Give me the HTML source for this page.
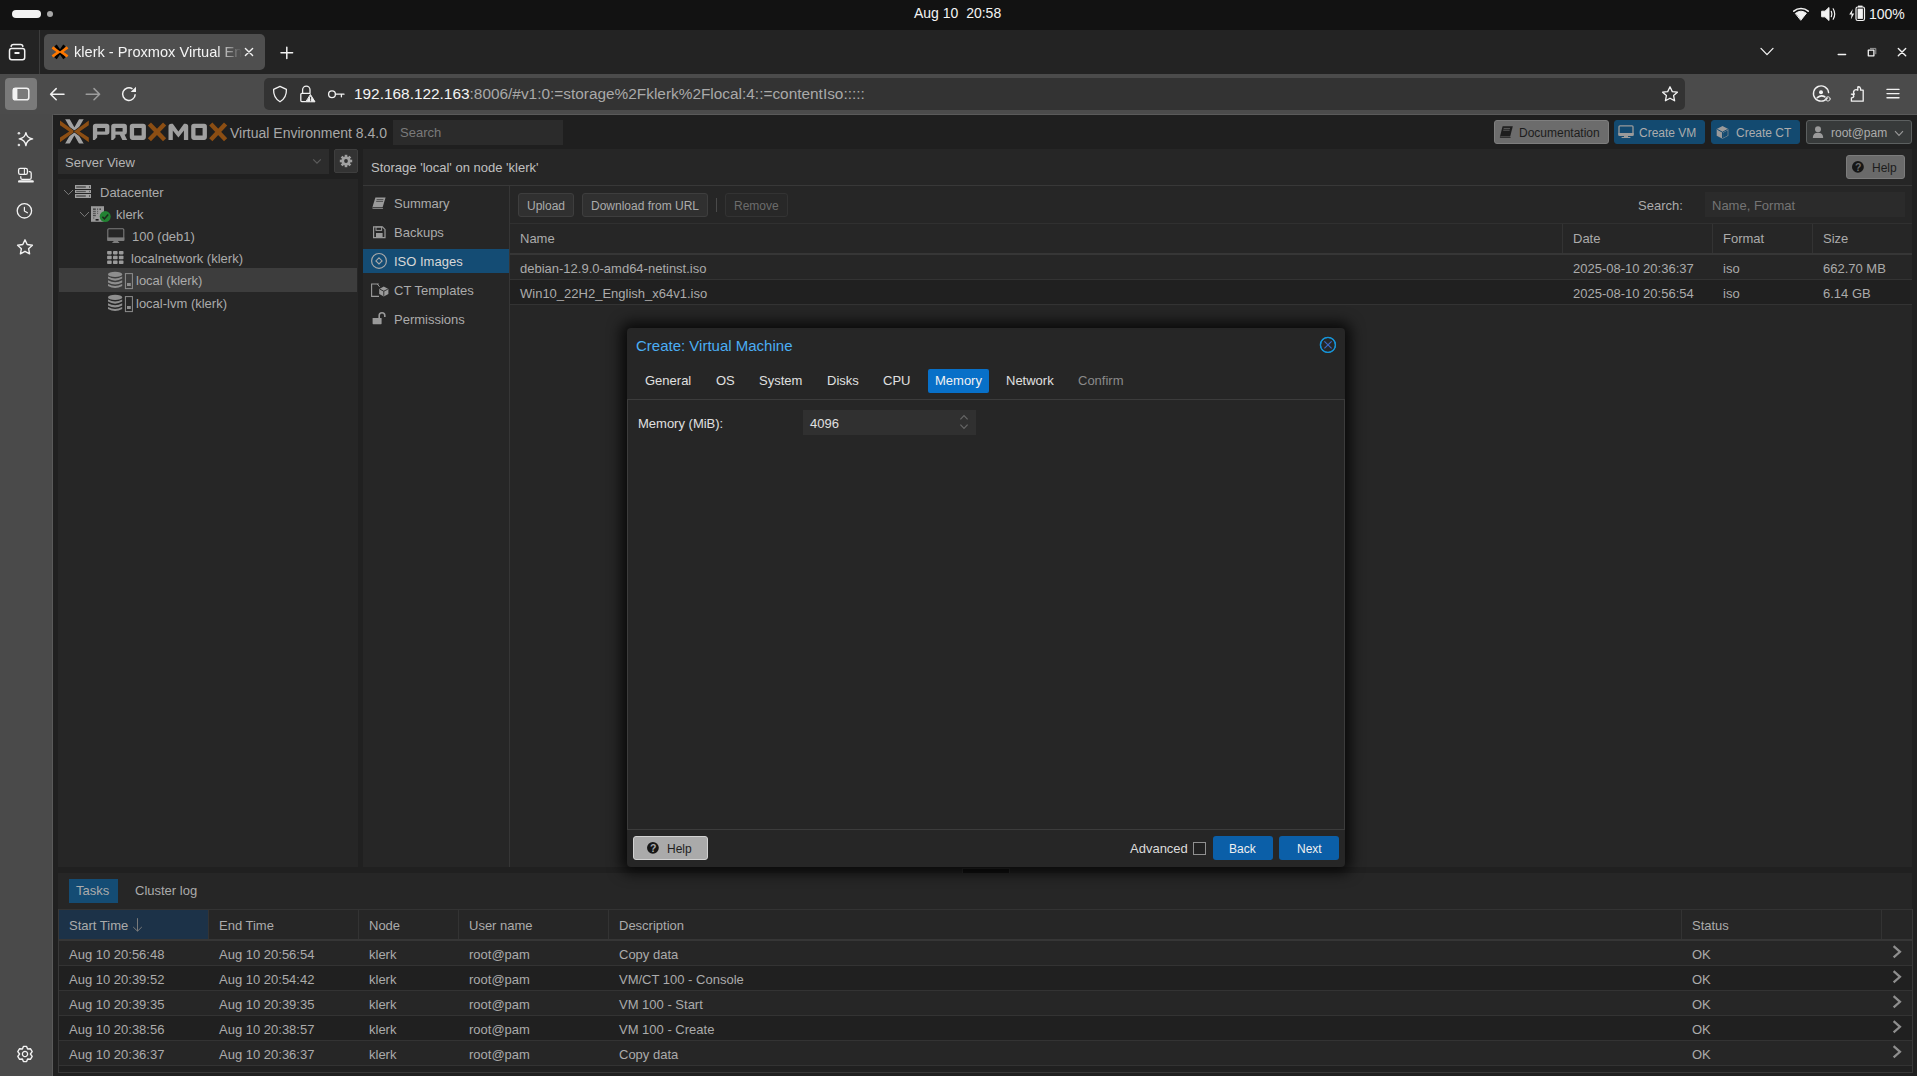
<!DOCTYPE html>
<html><head><meta charset="utf-8">
<style>
*{box-sizing:border-box}
html,body{margin:0;padding:0}
body{width:1917px;height:1076px;overflow:hidden;position:relative;background:#1b1b1b;font-family:"Liberation Sans",sans-serif;color:#d6d6d6}
.a{position:absolute}
.t{position:absolute;white-space:nowrap}
svg{position:absolute;overflow:visible}
</style></head><body>

<!-- ===== OS top bar ===== -->
<div class="a" style="left:0;top:0;width:1917px;height:30px;background:#121212"></div>
<div class="a" style="left:12px;top:10px;width:29px;height:8px;border-radius:4px;background:#f2f2f2"></div>
<div class="a" style="left:47px;top:11px;width:6px;height:6px;border-radius:3px;background:#a8a8a8"></div>
<div class="t" style="left:914px;top:3px;height:20px;line-height:20px;font-size:14px;color:#f4f4f4">Aug 10&nbsp;&nbsp;20:58</div>
<div class="t" style="left:1869px;top:4px;height:20px;line-height:20px;font-size:14px;color:#f4f4f4">100%</div>

<!-- ===== tab strip ===== -->
<div class="a" style="left:0;top:30px;width:1917px;height:44px;background:#232323"></div>
<div class="a" style="left:39px;top:30px;width:1px;height:44px;background:#3c3c3c"></div>
<div class="a" style="left:44px;top:34px;width:221px;height:36px;border-radius:5px;background:#4f4f4f"></div>
<div class="t" style="left:74px;top:42px;height:20px;line-height:20px;font-size:14.6px;color:#f4f4f4;width:168px;overflow:hidden;-webkit-mask-image:linear-gradient(90deg,#000 85%,transparent)">klerk - Proxmox Virtual Environment</div>

<!-- ===== nav toolbar ===== -->
<div class="a" style="left:0;top:74px;width:1917px;height:40px;background:#4b4b4b"></div>
<div class="a" style="left:5px;top:78px;width:32px;height:32px;border-radius:4px;background:#7a7a7a"></div>
<div class="a" style="left:264px;top:78px;width:1421px;height:32px;border-radius:5px;background:#333333"></div>
<div class="t" style="left:354px;top:83px;height:22px;line-height:22px;font-size:15.4px;color:#f4f4f4">192.168.122.163<span style="color:#a9a9a9">:8006/#v1:0:=storage%2Fklerk%2Flocal:4::=contentIso:::::</span></div>

<!-- ===== browser sidebar ===== -->
<div class="a" style="left:0;top:114px;width:53px;height:962px;background:#4a4a4a"></div>
<div class="a" style="left:52px;top:114px;width:1865px;height:962px;background:#202020;border-top:1px solid #5a5a5a;border-left:1px solid #5a5a5a;border-top-left-radius:2px"></div>

<!-- ===== proxmox header ===== -->
<div class="a" style="left:53px;top:115px;width:1864px;height:34px;background:#1f1f1f"></div>
<div class="t" style="left:230px;top:123px;height:20px;line-height:20px;font-size:14px;color:#a8a8a8">Virtual Environment 8.4.0</div>
<div class="a" style="left:393px;top:120px;width:170px;height:25px;background:#2b2b2b"></div>
<div class="t" style="left:400px;top:123px;height:20px;line-height:20px;font-size:13px;color:#7a7a7a">Search</div>

<!-- header buttons -->
<div class="a" style="left:1494px;top:120px;width:115px;height:24px;border-radius:3px;background:#6c6c6c;border:1px solid #7e7e7e"></div>
<div class="t" style="left:1519px;top:123px;height:20px;line-height:20px;font-size:12px;color:#1c1c1c">Documentation</div>
<div class="a" style="left:1614px;top:120px;width:91px;height:24px;border-radius:3px;background:#134a70;border:1px solid #134a70"></div>
<div class="t" style="left:1639px;top:123px;height:20px;line-height:20px;font-size:12px;color:#acacac">Create VM</div>
<div class="a" style="left:1711px;top:120px;width:89px;height:24px;border-radius:3px;background:#134a70;border:1px solid #134a70"></div>
<div class="t" style="left:1736px;top:123px;height:20px;line-height:20px;font-size:12px;color:#acacac">Create CT</div>
<div class="a" style="left:1806px;top:120px;width:106px;height:24px;border-radius:3px;background:#373a3a;border:1px solid #5c6060"></div>
<div class="t" style="left:1831px;top:123px;height:20px;line-height:20px;font-size:12px;color:#acacac">root@pam</div>

<!-- ===== left tree ===== -->
<div class="a" style="left:58px;top:149px;width:271px;height:25px;background:#2c2c2c"></div>
<div class="t" style="left:65px;top:153px;height:20px;line-height:20px;font-size:13px;color:#b4b4b4">Server View</div>
<div class="a" style="left:334px;top:149px;width:24px;height:24px;border-radius:2px;background:#333;border:1px solid #3e3e3e"></div>
<div class="a" style="left:58px;top:179px;width:300px;height:688px;background:#262626"></div>
<div class="a" style="left:59px;top:268px;width:298px;height:24px;background:#3d3d3d"></div>
<div class="t" style="left:100px;top:183px;height:20px;line-height:20px;font-size:13px;color:#ababab">Datacenter</div>
<div class="t" style="left:116px;top:205px;height:20px;line-height:20px;font-size:13px;color:#ababab">klerk</div>
<div class="t" style="left:132px;top:227px;height:20px;line-height:20px;font-size:13px;color:#ababab">100 (deb1)</div>
<div class="t" style="left:131px;top:249px;height:20px;line-height:20px;font-size:13px;color:#ababab">localnetwork (klerk)</div>
<div class="t" style="left:136px;top:271px;height:20px;line-height:20px;font-size:13px;color:#ababab">local (klerk)</div>
<div class="t" style="left:136px;top:294px;height:20px;line-height:20px;font-size:13px;color:#ababab">local-lvm (klerk)</div>

<!-- ===== content panel ===== -->
<div class="a" style="left:363px;top:149px;width:1549px;height:718px;background:#262626"></div>
<div class="a" style="left:363px;top:185px;width:1549px;height:1px;background:#383838"></div>
<div class="t" style="left:371px;top:158px;height:20px;line-height:20px;font-size:13px;color:#c0c0c0">Storage 'local' on node 'klerk'</div>


<div class="a" style="left:1846px;top:155px;width:59px;height:24px;border-radius:3px;background:#6a6a6a;border:1px solid #7c7c7c"></div>
<div class="t" style="left:1872px;top:158px;height:20px;line-height:20px;font-size:12px;color:#1c1c1c">Help</div>
<!-- nav menu -->
<div class="a" style="left:509px;top:186px;width:1px;height:681px;background:#363636"></div>
<div class="a" style="left:363px;top:249px;width:146px;height:24px;background:#144c74"></div>
<div class="t" style="left:394px;top:194px;height:20px;line-height:20px;font-size:13px;color:#ababab">Summary</div>
<div class="t" style="left:394px;top:223px;height:20px;line-height:20px;font-size:13px;color:#ababab">Backups</div>
<div class="t" style="left:394px;top:252px;height:20px;line-height:20px;font-size:13px;color:#d8d8d8">ISO Images</div>
<div class="t" style="left:394px;top:281px;height:20px;line-height:20px;font-size:13px;color:#ababab">CT Templates</div>
<div class="t" style="left:394px;top:310px;height:20px;line-height:20px;font-size:13px;color:#ababab">Permissions</div>

<!-- iso toolbar -->
<div class="a" style="left:518px;top:193px;width:56px;height:24px;border-radius:3px;background:#303030;border:1px solid #3e3e3e"></div>
<div class="t" style="left:527px;top:196px;height:20px;line-height:20px;font-size:12px;color:#ababab">Upload</div>
<div class="a" style="left:582px;top:193px;width:126px;height:24px;border-radius:3px;background:#303030;border:1px solid #3e3e3e"></div>
<div class="t" style="left:591px;top:196px;height:20px;line-height:20px;font-size:12px;color:#ababab">Download from URL</div>
<div class="a" style="left:716px;top:198px;width:1px;height:14px;background:#4a4a4a"></div>
<div class="a" style="left:725px;top:193px;width:63px;height:24px;border-radius:3px;background:#282828;border:1px solid #333"></div>
<div class="t" style="left:734px;top:196px;height:20px;line-height:20px;font-size:12px;color:#6c6c6c">Remove</div>
<div class="t" style="left:1638px;top:196px;height:20px;line-height:20px;font-size:13px;color:#ababab">Search:</div>
<div class="a" style="left:1705px;top:192px;width:200px;height:25px;background:#2b2b2b"></div>
<div class="t" style="left:1712px;top:196px;height:20px;line-height:20px;font-size:13px;color:#747474">Name, Format</div>
<div class="a" style="left:510px;top:223px;width:1402px;height:1px;background:#303030"></div>

<!-- iso grid -->
<div class="a" style="left:510px;top:253px;width:1402px;height:2px;background:#363636"></div>
<div class="a" style="left:1562px;top:224px;width:1px;height:29px;background:#333"></div>
<div class="a" style="left:1712px;top:224px;width:1px;height:29px;background:#333"></div>
<div class="a" style="left:1812px;top:224px;width:1px;height:29px;background:#333"></div>
<div class="t" style="left:520px;top:229px;height:20px;line-height:20px;font-size:13px;color:#ababab">Name</div>
<div class="t" style="left:1573px;top:229px;height:20px;line-height:20px;font-size:13px;color:#ababab">Date</div>
<div class="t" style="left:1723px;top:229px;height:20px;line-height:20px;font-size:13px;color:#ababab">Format</div>
<div class="t" style="left:1823px;top:229px;height:20px;line-height:20px;font-size:13px;color:#ababab">Size</div>
<div class="a" style="left:510px;top:279px;width:1402px;height:1px;background:#333"></div>
<div class="a" style="left:510px;top:280px;width:1402px;height:24px;background:#202020"></div>
<div class="a" style="left:510px;top:304px;width:1402px;height:1px;background:#333"></div>
<div class="t" style="left:520px;top:259px;height:20px;line-height:20px;font-size:13px;color:#ababab">debian-12.9.0-amd64-netinst.iso</div>
<div class="t" style="left:1573px;top:259px;height:20px;line-height:20px;font-size:13px;color:#ababab">2025-08-10 20:36:37</div>
<div class="t" style="left:1723px;top:259px;height:20px;line-height:20px;font-size:13px;color:#ababab">iso</div>
<div class="t" style="left:1823px;top:259px;height:20px;line-height:20px;font-size:13px;color:#ababab">662.70 MB</div>
<div class="t" style="left:520px;top:284px;height:20px;line-height:20px;font-size:13px;color:#ababab">Win10_22H2_English_x64v1.iso</div>
<div class="t" style="left:1573px;top:284px;height:20px;line-height:20px;font-size:13px;color:#ababab">2025-08-10 20:56:54</div>
<div class="t" style="left:1723px;top:284px;height:20px;line-height:20px;font-size:13px;color:#ababab">iso</div>
<div class="t" style="left:1823px;top:284px;height:20px;line-height:20px;font-size:13px;color:#ababab">6.14 GB</div>

<!-- ===== bottom tasks panel ===== -->
<div class="a" style="left:58px;top:873px;width:1854px;height:203px;background:#262626"></div>
<div class="a" style="left:69px;top:879px;width:49px;height:24px;background:#144c74"></div>
<div class="t" style="left:76px;top:881px;height:20px;line-height:20px;font-size:13px;color:#ababab">Tasks</div>
<div class="t" style="left:135px;top:881px;height:20px;line-height:20px;font-size:13px;color:#ababab">Cluster log</div>
<div class="a" style="left:58px;top:909px;width:1854px;height:1px;background:#333"></div>
<div class="a" style="left:59px;top:910px;width:149px;height:30px;background:#1c3248"></div>
<div class="a" style="left:58px;top:939px;width:1854px;height:2px;background:#363636"></div>
<div class="a" style="left:208px;top:910px;width:1px;height:29px;background:#333"></div>
<div class="a" style="left:358px;top:910px;width:1px;height:29px;background:#333"></div>
<div class="a" style="left:458px;top:910px;width:1px;height:29px;background:#333"></div>
<div class="a" style="left:608px;top:910px;width:1px;height:29px;background:#333"></div>
<div class="a" style="left:1681px;top:910px;width:1px;height:29px;background:#333"></div>
<div class="a" style="left:1881px;top:910px;width:1px;height:29px;background:#333"></div>
<div class="t" style="left:69px;top:916px;height:20px;line-height:20px;font-size:13px;color:#ababab">Start Time</div>
<div class="t" style="left:219px;top:916px;height:20px;line-height:20px;font-size:13px;color:#ababab">End Time</div>
<div class="t" style="left:369px;top:916px;height:20px;line-height:20px;font-size:13px;color:#ababab">Node</div>
<div class="t" style="left:469px;top:916px;height:20px;line-height:20px;font-size:13px;color:#ababab">User name</div>
<div class="t" style="left:619px;top:916px;height:20px;line-height:20px;font-size:13px;color:#ababab">Description</div>
<div class="t" style="left:1692px;top:916px;height:20px;line-height:20px;font-size:13px;color:#ababab">Status</div>
<div class="a" style="left:58px;top:965px;width:1854px;height:1px;background:#333"></div>
<div class="t" style="left:69px;top:945px;height:20px;line-height:20px;font-size:13px;color:#ababab">Aug 10 20:56:48</div>
<div class="t" style="left:219px;top:945px;height:20px;line-height:20px;font-size:13px;color:#ababab">Aug 10 20:56:54</div>
<div class="t" style="left:369px;top:945px;height:20px;line-height:20px;font-size:13px;color:#ababab">klerk</div>
<div class="t" style="left:469px;top:945px;height:20px;line-height:20px;font-size:13px;color:#ababab">root@pam</div>
<div class="t" style="left:619px;top:945px;height:20px;line-height:20px;font-size:13px;color:#ababab">Copy data</div>
<div class="t" style="left:1692px;top:945px;height:20px;line-height:20px;font-size:13px;color:#ababab">OK</div>
<div class="a" style="left:58px;top:966px;width:1854px;height:24px;background:#202020"></div>
<div class="a" style="left:58px;top:990px;width:1854px;height:1px;background:#333"></div>
<div class="t" style="left:69px;top:970px;height:20px;line-height:20px;font-size:13px;color:#ababab">Aug 10 20:39:52</div>
<div class="t" style="left:219px;top:970px;height:20px;line-height:20px;font-size:13px;color:#ababab">Aug 10 20:54:42</div>
<div class="t" style="left:369px;top:970px;height:20px;line-height:20px;font-size:13px;color:#ababab">klerk</div>
<div class="t" style="left:469px;top:970px;height:20px;line-height:20px;font-size:13px;color:#ababab">root@pam</div>
<div class="t" style="left:619px;top:970px;height:20px;line-height:20px;font-size:13px;color:#ababab">VM/CT 100 - Console</div>
<div class="t" style="left:1692px;top:970px;height:20px;line-height:20px;font-size:13px;color:#ababab">OK</div>
<div class="a" style="left:58px;top:1015px;width:1854px;height:1px;background:#333"></div>
<div class="t" style="left:69px;top:995px;height:20px;line-height:20px;font-size:13px;color:#ababab">Aug 10 20:39:35</div>
<div class="t" style="left:219px;top:995px;height:20px;line-height:20px;font-size:13px;color:#ababab">Aug 10 20:39:35</div>
<div class="t" style="left:369px;top:995px;height:20px;line-height:20px;font-size:13px;color:#ababab">klerk</div>
<div class="t" style="left:469px;top:995px;height:20px;line-height:20px;font-size:13px;color:#ababab">root@pam</div>
<div class="t" style="left:619px;top:995px;height:20px;line-height:20px;font-size:13px;color:#ababab">VM 100 - Start</div>
<div class="t" style="left:1692px;top:995px;height:20px;line-height:20px;font-size:13px;color:#ababab">OK</div>
<div class="a" style="left:58px;top:1016px;width:1854px;height:24px;background:#202020"></div>
<div class="a" style="left:58px;top:1040px;width:1854px;height:1px;background:#333"></div>
<div class="t" style="left:69px;top:1020px;height:20px;line-height:20px;font-size:13px;color:#ababab">Aug 10 20:38:56</div>
<div class="t" style="left:219px;top:1020px;height:20px;line-height:20px;font-size:13px;color:#ababab">Aug 10 20:38:57</div>
<div class="t" style="left:369px;top:1020px;height:20px;line-height:20px;font-size:13px;color:#ababab">klerk</div>
<div class="t" style="left:469px;top:1020px;height:20px;line-height:20px;font-size:13px;color:#ababab">root@pam</div>
<div class="t" style="left:619px;top:1020px;height:20px;line-height:20px;font-size:13px;color:#ababab">VM 100 - Create</div>
<div class="t" style="left:1692px;top:1020px;height:20px;line-height:20px;font-size:13px;color:#ababab">OK</div>
<div class="a" style="left:58px;top:1065px;width:1854px;height:1px;background:#333"></div>
<div class="t" style="left:69px;top:1045px;height:20px;line-height:20px;font-size:13px;color:#ababab">Aug 10 20:36:37</div>
<div class="t" style="left:219px;top:1045px;height:20px;line-height:20px;font-size:13px;color:#ababab">Aug 10 20:36:37</div>
<div class="t" style="left:369px;top:1045px;height:20px;line-height:20px;font-size:13px;color:#ababab">klerk</div>
<div class="t" style="left:469px;top:1045px;height:20px;line-height:20px;font-size:13px;color:#ababab">root@pam</div>
<div class="t" style="left:619px;top:1045px;height:20px;line-height:20px;font-size:13px;color:#ababab">Copy data</div>
<div class="t" style="left:1692px;top:1045px;height:20px;line-height:20px;font-size:13px;color:#ababab">OK</div>

<div class="a" style="left:58px;top:1066px;width:1854px;height:6px;background:#202020"></div>
<div class="a" style="left:58px;top:1072px;width:1855px;height:1px;background:#383838"></div>
<div class="a" style="left:53px;top:1073px;width:1864px;height:3px;background:#202020"></div>
<div class="a" style="left:58px;top:909px;width:1px;height:164px;background:#383838"></div>
<div class="a" style="left:1912px;top:909px;width:1px;height:164px;background:#383838"></div>
<!-- splitter handle -->
<div class="a" style="left:962px;top:868px;width:48px;height:5px;background:#111;border:1px solid #2a2a2a;border-bottom:none"></div>

<!-- ===== modal ===== -->
<div class="a" style="left:627px;top:328px;width:718px;height:539px;border-radius:4px;background:#262626;box-shadow:0 0 14px 6px rgba(0,0,0,0.75)"></div>
<div class="t" style="left:636px;top:335px;height:22px;line-height:22px;font-size:15px;color:#4baef4">Create: Virtual Machine</div>
<div class="a" style="left:1320px;top:337px;width:16px;height:16px;border-radius:50%;border:1.5px solid #1c98dc"></div>
<div class="a" style="left:928px;top:369px;width:61px;height:24px;border-radius:2px;background:#0870c8"></div>
<div class="t" style="left:645px;top:371px;height:20px;line-height:20px;font-size:13px;color:#e0e0e0">General</div>
<div class="t" style="left:716px;top:371px;height:20px;line-height:20px;font-size:13px;color:#e0e0e0">OS</div>
<div class="t" style="left:759px;top:371px;height:20px;line-height:20px;font-size:13px;color:#e0e0e0">System</div>
<div class="t" style="left:827px;top:371px;height:20px;line-height:20px;font-size:13px;color:#e0e0e0">Disks</div>
<div class="t" style="left:883px;top:371px;height:20px;line-height:20px;font-size:13px;color:#e0e0e0">CPU</div>
<div class="t" style="left:935px;top:371px;height:20px;line-height:20px;font-size:13px;color:#f2f2f2">Memory</div>
<div class="t" style="left:1006px;top:371px;height:20px;line-height:20px;font-size:13px;color:#e0e0e0">Network</div>
<div class="t" style="left:1078px;top:371px;height:20px;line-height:20px;font-size:13px;color:#8a8a8a">Confirm</div>
<div class="a" style="left:627px;top:399px;width:718px;height:431px;border:1px solid #3c3c3c;border-right-color:#3c3c3c"></div>
<div class="t" style="left:638px;top:414px;height:20px;line-height:20px;font-size:13px;color:#e0e0e0">Memory (MiB):</div>
<div class="a" style="left:803px;top:410px;width:173px;height:25px;background:#303030"></div>
<div class="t" style="left:810px;top:414px;height:20px;line-height:20px;font-size:13px;color:#e0e0e0">4096</div>

<div class="a" style="left:633px;top:836px;width:75px;height:24px;border-radius:3px;background:#aaaaaa;border:1px solid #d2d2d2"></div>
<div class="t" style="left:667px;top:839px;height:20px;line-height:20px;font-size:12px;color:#1e1e1e">Help</div>
<div class="t" style="left:1130px;top:839px;height:20px;line-height:20px;font-size:13px;color:#dcdcdc">Advanced</div>
<div class="a" style="left:1193px;top:842px;width:13px;height:13px;border:1px solid #909090;background:#222"></div>
<div class="a" style="left:1213px;top:836px;width:60px;height:24px;border-radius:3px;background:#0b5fa8"></div>
<div class="t" style="left:1229px;top:839px;height:20px;line-height:20px;font-size:12px;color:#f0f0f0">Back</div>
<div class="a" style="left:1279px;top:836px;width:60px;height:24px;border-radius:3px;background:#0b5fa8"></div>
<div class="t" style="left:1297px;top:839px;height:20px;line-height:20px;font-size:12px;color:#f0f0f0">Next</div>

<!-- ===== icon layer (browser chrome) ===== -->
<svg width="1917" height="1076" style="left:0;top:0" viewBox="0 0 1917 1076">
<g fill="none" stroke="#f2f2f2" stroke-width="1.5" stroke-linecap="round" stroke-linejoin="round">
 <!-- wifi -->
 <path d="M1793.8 11.2 A 11 11 0 0 1 1808.2 11.2" stroke-width="1.6"/>
 <path d="M1795.6 13.2 A 9 9 0 0 1 1806.4 13.2 L1801 20 Z" fill="#f2f2f2" stroke-width="1"/>
 <!-- volume -->
 <path d="M1822 11.2 L1825 11.2 L1829 7.5 L1829 20.5 L1825 16.8 L1822 16.8 Z" fill="#f2f2f2" stroke-width="1"/>
 <path d="M1831.3 11.3 Q1832.5 14 1831.3 16.7" stroke-width="1.2"/>
 <path d="M1833.2 8.8 Q1836.2 14 1833.2 19.2" stroke-width="1.2"/>
 <!-- battery -->
 <rect x="1856" y="7" width="8.5" height="13.5" rx="1.8" stroke-width="1.2"/>
 <rect x="1858" y="5.6" width="4.5" height="1.6" fill="#f2f2f2" stroke="none"/>
 <rect x="1857.6" y="8.6" width="5.3" height="10.3" fill="#f2f2f2" stroke="none"/>
 <path d="M1852.8 9 L1849.2 14.6 L1851.6 14.6 L1850.8 19.6 L1854.2 13.6 L1851.8 13.6 Z" fill="#f2f2f2" stroke="none"/>

 <!-- tab manager -->
 <path d="M11.2 46.6 Q11.2 44.5 13.5 44.5 L20.6 44.5 Q22.8 44.5 22.8 46.6" />
 <rect x="9.5" y="48.5" width="15.2" height="11.2" rx="2.2"/>
 <path d="M15.2 53 L18.8 53" stroke-width="1.8"/>
 <!-- tab close -->
 <path d="M245.4 48.6 L252.6 55.6 M252.6 48.6 L245.4 55.6" stroke-width="1.4"/>
 <!-- new tab + -->
 <path d="M286.8 47.2 L286.8 58.6 M281 52.8 L292.6 52.8" stroke-width="1.5"/>
 <!-- list chevron -->
 <path d="M1761 48.4 L1767 54.6 L1773 48.4" stroke-width="1.3"/>
 <!-- minimize -->
 <path d="M1838.2 54.5 L1845.6 54.5" stroke-width="1.4"/>
 <!-- restore -->
 <rect x="1868.3" y="50.2" width="5.6" height="5.6" stroke-width="1.3" stroke-linecap="butt"/>
 <path d="M1870 48.4 L1875.8 48.4 L1875.8 54.2" stroke="#9a9a9a" stroke-width="1" stroke-linecap="butt"/>
 <!-- close -->
 <path d="M1898.3 48.4 L1905.7 55.8 M1905.7 48.4 L1898.3 55.8" stroke-width="1.4"/>

 <!-- sidebar toggle -->
 <rect x="13.2" y="88.2" width="15.6" height="11.6" rx="2.4" stroke-width="1.5"/>
 <rect x="13.2" y="88.2" width="4.2" height="11.6" fill="#f2f2f2" stroke="none"/>
 <!-- back -->
 <path d="M64 94.2 L50.6 94.2 M56.2 88.6 L50.6 94.2 L56.2 99.8"/>
 <!-- forward -->
 <path d="M86.2 94.2 L99.6 94.2 M94 88.6 L99.6 94.2 L94 99.8" stroke="#9c9c9c"/>
 <!-- reload -->
 <path d="M135.2 94.2 A 6.3 6.3 0 1 1 132.5 88.9" stroke-linecap="butt"/>
 <path d="M136 86.8 L136 92.1 L130.7 92.1 Z" fill="#f2f2f2" stroke="none"/>

 <!-- shield -->
 <path d="M280 86.3 L273.6 89.4 Q273.2 97.8 280 101.8 Q286.8 97.8 286.4 89.4 Z" stroke-width="1.3"/>
 <!-- lock + warning -->
 <path d="M302.6 93 L302.6 89.8 A 3.7 3.7 0 0 1 310 89.8 L310 93" stroke-width="1.3"/>
 <path d="M305.5 101.6 L301.8 101.6 Q300.8 101.6 300.8 100.6 L300.8 94.4 Q300.8 93.4 301.8 93.4 L309.8 93.4" stroke-width="1.3"/>
 <path d="M310.6 94.8 L315 101.8 L306.2 101.8 Z" fill="#f2f2f2" stroke-width="1"/>
 <path d="M310.6 97.2 L310.6 99.4 M310.6 100.6 L310.6 100.8" stroke="#333" stroke-width="1"/>
 <!-- key -->
 <circle cx="332" cy="94.2" r="3.4" stroke-width="1.3"/>
 <path d="M335.4 94.2 L344 94.2 M341.4 94.2 L341.4 96.8" stroke-width="1.3"/>

 <!-- star (url) -->
 <path d="M1670 86.8 L1672.3 91.6 L1677.4 92.2 L1673.6 95.6 L1674.6 100.8 L1670 98.2 L1665.4 100.8 L1666.4 95.6 L1662.6 92.2 L1667.7 91.6 Z" stroke-width="1.3"/>
 <!-- account -->
 <path d="M1827.2 98 A 7.6 7.6 0 1 1 1828.6 92.6" stroke-width="1.4"/>
 <circle cx="1821" cy="92.3" r="2" fill="#f2f2f2" stroke="none"/>
 <path d="M1817.3 97.6 Q1821 94.6 1824.8 96.8" stroke-width="1.6"/>
 <circle cx="1828" cy="98.9" r="2.2" stroke="#d8d8d8" stroke-width="1"/>
 <!-- extensions -->
 <path d="M1851.4 94.2 L1854.4 94.2 Q1852.6 92 1854.4 90.2 Q1856 89.2 1857.8 90.2 L1857.8 86.8 Q1860 86.4 1860.6 88.6 L1860.6 90.2 L1863.2 90.2 L1863.2 101.2 L1851.4 101.2 L1851.4 97.8 Q1853.8 97.8 1853.8 96 Q1853.8 94.6 1851.4 94.2 Z" stroke-width="1.3"/>
 <!-- menu -->
 <path d="M1887 89.4 L1899 89.4 M1887 93.6 L1899 93.6 M1887 97.8 L1899 97.8" stroke-width="1.4"/>

 <!-- sidebar: sparkle -->
 <path d="M25.9 132.6 Q26.8 138 32.6 138.9 Q26.8 139.8 25.9 145.6 Q25 139.8 19.2 138.9 Q25 138 25.9 132.6 Z" stroke-width="1.4"/>
 <circle cx="18.9" cy="133.2" r="1.3" fill="#dcdcdc" stroke="none"/>
 <circle cx="18.9" cy="145" r="1.3" fill="#dcdcdc" stroke="none"/>
 <!-- devices -->
 <rect x="18.6" y="168.4" width="8.8" height="6" rx="1.6" stroke-width="1.3"/>
 <path d="M24.4 168.8 L24.4 174" stroke-width="1.1"/>
 <path d="M20.8 176.6 L20.8 178 Q20.8 179.4 22.2 179.4 L29.6 179.4 Q31.2 179.4 31.2 177.8 L31.2 173.2 Q31.2 171.6 29.6 171.6 L29.2 171.6" stroke-width="1.3"/>
 <path d="M19.2 181.4 L32.6 181.4" stroke-width="2.4"/>
 <!-- clock -->
 <circle cx="24.4" cy="210.8" r="7.2" stroke-width="1.3"/>
 <path d="M24.4 207.4 L24.4 211 L27.4 212.8" stroke-width="1.2"/>
 <!-- star -->
 <path d="M25 239.8 L27.2 244.5 L32.4 245.2 L28.6 248.7 L29.6 253.8 L25 251.3 L20.4 253.8 L21.4 248.7 L17.6 245.2 L22.8 244.5 Z" stroke-width="1.4"/>
 <!-- gear -->
 <g transform="translate(25 1054)">
  <path d="M-1.6 -7.6 L1.6 -7.6 L2.6 -5 L5.4 -5.3 L7.2 -2.4 L5.4 0 L7.2 2.4 L5.4 5.3 L2.6 5 L1.6 7.6 L-1.6 7.6 L-2.6 5 L-5.4 5.3 L-7.2 2.4 L-5.4 0 L-7.2 -2.4 L-5.4 -5.3 L-2.6 -5 Z" stroke-width="1.4"/>
  <circle r="2.6" stroke-width="1.3"/>
 </g>
</g>
<!-- favicon -->
<g stroke-linecap="butt">
 <path d="M55.6 45.4 L64.4 58.4 M64.4 45.4 L55.6 58.4" stroke="#000" stroke-width="2.8"/>
 <path d="M52.4 47.4 L58.6 52 L52.4 56.4 M67.6 47.4 L61.4 52 L67.6 56.4" stroke="#ff7800" stroke-width="2.6" fill="none" stroke-linejoin="miter"/>
</g>
</svg>

<!-- ===== icon layer (proxmox) ===== -->
<svg width="1917" height="1076" style="left:0;top:0" viewBox="0 0 1917 1076">
<!-- logo X -->
<defs><clipPath id="lc"><rect x="55" y="119.3" width="40" height="24.2"/></clipPath></defs>
<g clip-path="url(#lc)" stroke-linecap="butt" fill="none">
 <path d="M66.2 117 L82.6 145.8 M82.6 117 L66.2 145.8" stroke="#a2a2a2" stroke-width="4"/>
</g>
<g fill="#8c4e13" stroke="#1f1f1f" stroke-width="1.2" paint-order="stroke" stroke-linejoin="miter">
 <path d="M60 120.6 L74.8 131.4 L60 142.2 L60 137.6 L69.2 131.4 L60 125.2 Z"/>
 <path d="M88.8 120.6 L74 131.4 L88.8 142.2 L88.8 137.6 L79.6 131.4 L88.8 125.2 Z"/>
</g>
<!-- PROXMOX letters -->
<g fill="#a0a0a0" fill-rule="evenodd">
 <path d="M92.9 139.9 L92.9 126.6 Q92.9 123.8 95.7 123.8 L106.6 123.8 Q109.4 123.8 109.4 126.6 L109.4 132 Q109.4 134.8 106.6 134.8 L97.2 134.8 L97.2 137.6 L94.8 139.9 Z M97.2 128.1 L105.1 128.1 L105.1 131.4 L97.2 131.4 Z"/>
 <path d="M111.2 139.9 L111.2 126.6 Q111.2 123.8 114 123.8 L124.1 123.8 Q126.9 123.8 126.9 126.6 L126.9 132 Q126.9 134.6 124.6 134.8 L127.2 139.9 L122.4 139.9 L119.8 134.8 L115.5 134.8 L115.5 137.6 L113.1 139.9 Z M115.5 128.1 L122.6 128.1 L122.6 131.4 L115.5 131.4 Z"/>
 <path d="M132.6 123.8 L143.1 123.8 Q145.9 123.8 145.9 126.6 L145.9 137.1 Q145.9 139.9 143.1 139.9 L132.6 139.9 Q129.8 139.9 129.8 137.1 L129.8 126.6 Q129.8 123.8 132.6 123.8 Z M134.1 128.1 L141.6 128.1 L141.6 135.6 L134.1 135.6 Z"/>
 <path d="M194 123.8 L204.1 123.8 Q206.9 123.8 206.9 126.6 L206.9 137.1 Q206.9 139.9 204.1 139.9 L194 139.9 Q191.2 139.9 191.2 137.1 L191.2 126.6 Q191.2 123.8 194 123.8 Z M195.5 128.1 L202.6 128.1 L202.6 135.6 L195.5 135.6 Z"/>
 <path d="M168.5 139.9 L168.5 126.6 Q168.5 123.8 171.3 123.8 L172.8 123.8 L178.4 131.6 L184 123.8 L185.4 123.8 Q188.2 123.8 188.2 126.6 L188.2 139.9 L183.9 139.9 L183.9 130.4 L178.4 137.6 L172.8 130.4 L172.8 139.9 Z"/>
</g>
<g stroke="#8c4e13" stroke-width="4.4" stroke-linecap="butt" fill="none">
 <path d="M149.4 124 L164.6 139.7 M164.6 124 L149.4 139.7"/>
 <path d="M210.8 124 L225.6 139.7 M225.6 124 L210.8 139.7"/>
</g>

<!-- header button icons -->
<g fill="#1e1e1e">
 <path d="M1502.6 126.2 L1512.8 126.2 L1510.2 136.4 L1500 136.4 Z"/>
 <path d="M1500 136.6 Q1499.4 137.8 1500.6 137.8 L1510.4 137.8 L1510.8 137 L1501 137 Z"/>
</g>
<path d="M1503.6 128.4 L1510 128.4 M1503.2 130.2 L1509.6 130.2" stroke="#6c6c6c" stroke-width="0.8"/>
<g fill="none" stroke="#9a9a9a">
 <rect x="1619" y="125.8" width="14" height="9.6" rx="1" stroke-width="1.3"/>
</g>
<rect x="1618.4" y="133" width="15.2" height="2.6" fill="#9a9a9a"/>
<rect x="1624" y="135.6" width="4" height="1.6" fill="#9a9a9a"/>
<rect x="1621.6" y="137" width="8.8" height="1" fill="#9a9a9a"/>
<g transform="translate(1722.5 132.4)">
 <path d="M0 -6.4 L5.8 -3.3 L5.8 3.3 L0 6.4 L-5.8 3.3 L-5.8 -3.3 Z" fill="#9a9a9a"/>
 <path d="M-5.2 -3 L0 -0.2 L5.2 -3 M0 -0.2 L0 5.8" stroke="#134a70" stroke-width="1" fill="none"/>
 <path d="M0.6 0.3 L5.2 -2.2 L5.2 3 L0.6 5.6 Z" fill="#134a70"/>
</g>
<circle cx="1818" cy="129.2" r="3" fill="#9a9a9a"/>
<path d="M1812.8 138 Q1812.8 132.8 1818 132.8 Q1823.2 132.8 1823.2 138 Z" fill="#9a9a9a"/>
<path d="M1895 131.2 L1899 135.4 L1903 131.2" stroke="#9a9a9a" stroke-width="1.1" fill="none"/>

<!-- server view combo chevron + gear -->
<path d="M313.2 159.4 L317 163.2 L320.8 159.4" stroke="#5c5c5c" stroke-width="1.2" fill="none"/>
<g transform="translate(346 161)" fill="#a0a0a0">
 <circle r="4.6"/>
 <g id="teeth"><rect x="-1.3" y="-6.2" width="2.6" height="2.6"/><rect x="-1.3" y="3.6" width="2.6" height="2.6"/><rect x="-6.2" y="-1.3" width="2.6" height="2.6"/><rect x="3.6" y="-1.3" width="2.6" height="2.6"/></g>
 <g transform="rotate(45)"><rect x="-1.3" y="-6.2" width="2.6" height="2.6"/><rect x="-1.3" y="3.6" width="2.6" height="2.6"/><rect x="-6.2" y="-1.3" width="2.6" height="2.6"/><rect x="3.6" y="-1.3" width="2.6" height="2.6"/></g>
 <circle r="1.9" fill="#303030"/>
</g>

<!-- tree: chevrons -->
<path d="M64 190 L68.5 194.6 L73 190 M80 212 L84.5 216.6 L89 212" stroke="#7a7a7a" stroke-width="1" fill="none"/>
<!-- datacenter icon -->
<g fill="#a0a0a0">
 <rect x="75" y="185" width="16" height="4"/>
 <rect x="75" y="190" width="16" height="3"/>
 <rect x="75" y="194" width="16" height="4"/>
</g>
<g fill="#555">
 <rect x="76.2" y="186.2" width="9.6" height="1.6"/><rect x="89" y="186" width="0.9" height="2"/>
 <rect x="76.2" y="190.9" width="9.6" height="1.2"/><rect x="89" y="190.8" width="0.9" height="1.4"/>
 <rect x="76.2" y="195.2" width="9.6" height="1.6"/><rect x="89" y="195" width="0.9" height="2"/>
</g>
<!-- node building -->
<rect x="91" y="206.2" width="13" height="15.6" fill="#9a9a9a"/>
<g fill="#4a4a4a">
 <rect x="93" y="208.4" width="2.8" height="1.6"/><rect x="97.2" y="208.4" width="0.9" height="1.6"/><rect x="99.4" y="208.4" width="1.6" height="1.6"/>
 <rect x="93" y="210.8" width="2.8" height="1"/><rect x="97.2" y="210.8" width="0.9" height="1"/>
 <rect x="93" y="212.8" width="2.8" height="1"/><rect x="97.2" y="212.8" width="0.9" height="1"/>
 <rect x="93" y="214.8" width="2.8" height="1.4"/>
 <rect x="93" y="217.6" width="1.4" height="0.8"/>
 <rect x="95.6" y="219" width="3" height="1.6" fill="#1a1a1a"/>
</g>
<circle cx="105.2" cy="216.6" r="5.5" fill="#228232"/>
<path d="M102.4 216.8 L104.4 218.8 L108.2 214.6" stroke="#1c2a1c" stroke-width="1.5" fill="none"/>
<!-- VM monitor -->
<rect x="107.8" y="228.8" width="16" height="11.6" rx="1" fill="none" stroke="#7c7c7c" stroke-width="1.1"/>
<rect x="107.3" y="237.4" width="17" height="3.4" fill="#7c7c7c"/>
<rect x="113.4" y="240.8" width="4.8" height="1.4" fill="#7c7c7c"/>
<rect x="112.4" y="242" width="6.8" height="1" fill="#7c7c7c"/>
<!-- sdn grid -->
<g fill="#9a9a9a">
 <rect x="107.1" y="251" width="4.6" height="3.4" rx="0.8"/><rect x="113" y="251" width="4.6" height="3.4" rx="0.8"/><rect x="118.9" y="251" width="4.6" height="3.4" rx="0.8"/>
 <rect x="107.1" y="255.8" width="4.6" height="3.4" rx="0.8"/><rect x="113" y="255.8" width="4.6" height="3.4" rx="0.8"/><rect x="118.9" y="255.8" width="4.6" height="3.4" rx="0.8"/>
 <rect x="107.1" y="260.6" width="4.6" height="3.4" rx="0.8"/><rect x="113" y="260.6" width="4.6" height="3.4" rx="0.8"/><rect x="118.9" y="260.6" width="4.6" height="3.4" rx="0.8"/>
</g>
<!-- storage icons -->
<g id="db1" fill="#8e8e8e">
 <ellipse cx="115.1" cy="274.4" rx="7.1" ry="2.6"/>
 <path d="M108 276.4 Q115.1 280.4 122.2 276.4 L122.2 278.6 Q115.1 282.8 108 278.6 Z"/>
 <path d="M108 280.2 Q115.1 284.2 122.2 280.2 L122.2 282.4 Q115.1 286.6 108 282.4 Z"/>
 <path d="M108 284 Q115.1 288 122.2 284 L122.2 286 Q115.1 290 108 286 Z"/>
</g>
<use href="#db1" y="23"/>
<rect x="125.4" y="273.6" width="7" height="15" fill="none" stroke="#8e8e8e" stroke-width="1"/>
<rect x="127" y="283" width="3.8" height="3" fill="#8e8e8e"/>
<rect x="125.4" y="296.6" width="7" height="15" fill="none" stroke="#8e8e8e" stroke-width="1"/>
<rect x="127" y="306" width="3.8" height="3" fill="#8e8e8e"/>

<!-- nav menu icons -->
<path d="M375.4 197.4 L385.6 197.4 L382.6 207.2 L372.4 207.2 Z" fill="#9a9a9a"/>
<path d="M372.4 207.4 Q372 208.8 373.2 208.8 L382.8 208.8 L383.2 208 L373.2 208 Z" fill="#9a9a9a"/>
<path d="M376.6 199.6 L383.4 199.6 M376.2 201.4 L383 201.4" stroke="#3a3a3a" stroke-width="0.8"/>
<path d="M373.6 226.8 L382.4 226.8 L385 229.4 L385 237.6 L373.6 237.6 Z" fill="none" stroke="#9a9a9a" stroke-width="1.2"/>
<rect x="376" y="227" width="5.6" height="3.4" fill="none" stroke="#9a9a9a" stroke-width="1"/>
<rect x="376" y="233" width="6.6" height="4.6" fill="#9a9a9a"/>
<circle cx="379" cy="260.9" r="7.4" fill="none" stroke="#a8a8a8" stroke-width="1.2"/>
<path d="M379 257.8 L382.1 260.9 L379 264 L375.9 260.9 Z" fill="none" stroke="#a8a8a8" stroke-width="1.1"/>
<path d="M378.8 284 L371.6 284 L371.6 296.4 L379 296.4" fill="none" stroke="#9a9a9a" stroke-width="1.1"/>
<path d="M377.2 284 L379.6 286.8" stroke="#9a9a9a" stroke-width="1"/>
<g transform="translate(383.8 291.4)">
 <path d="M0 -4.8 L4.6 -2.4 L4.6 2.6 L0 5 L-4.6 2.6 L-4.6 -2.4 Z" fill="#9a9a9a"/>
 <path d="M-4 -2.2 L0 -0.2 L4 -2.2 M0 -0.2 L0 4.4" stroke="#262626" stroke-width="0.9" fill="none"/>
</g>
<rect x="372.6" y="318" width="9" height="6.2" rx="0.6" fill="#9a9a9a"/>
<path d="M379.2 318.2 L379.2 315.6 A 2.8 2.8 0 0 1 384.8 315.6 L384.8 317" stroke="#9a9a9a" stroke-width="1.6" fill="none"/>

<!-- help icon header -->
<circle cx="1857.9" cy="166.9" r="5.9" fill="#161616"/>
<text x="1854.9" y="170.9" font-family="Liberation Sans" font-weight="bold" font-size="10.5" fill="#6a6a6a">?</text>
<!-- help icon modal -->
<circle cx="652.9" cy="847.8" r="5.9" fill="#161616"/>
<text x="649.9" y="851.8" font-family="Liberation Sans" font-weight="bold" font-size="10.5" fill="#aaaaaa">?</text>

<!-- modal close -->
<circle cx="1327.9" cy="344.9" r="7.5" fill="none" stroke="#1694d8" stroke-width="1.4"/>
<path d="M1324.4 341.4 L1331.6 348.4 M1331.6 341.4 L1324.4 348.4" stroke="#3c68c4" stroke-width="1.2"/>
<!-- spinner -->
<path d="M960.4 419.4 L964 415.6 L967.6 419.4 M960.4 424.6 L964 428.4 L967.6 424.6" stroke="#666" stroke-width="1.2" fill="none"/>

<!-- sort arrow -->
<path d="M137.5 918.2 L137.5 931 M133.2 927 L137.5 931.2 L141.8 927" stroke="#7a7a7a" stroke-width="1" fill="none"/>
<!-- task row chevrons -->
<g stroke="#8e8e8e" stroke-width="2.2" fill="none">
 <path d="M1893.6 946.2 L1900 951.8 L1893.6 957.4"/>
 <path d="M1893.6 971.2 L1900 976.8 L1893.6 982.4"/>
 <path d="M1893.6 996.2 L1900 1001.8 L1893.6 1007.4"/>
 <path d="M1893.6 1021.2 L1900 1026.8 L1893.6 1032.4"/>
 <path d="M1893.6 1046.2 L1900 1051.8 L1893.6 1057.4"/>
</g>
</svg>

</body></html>
